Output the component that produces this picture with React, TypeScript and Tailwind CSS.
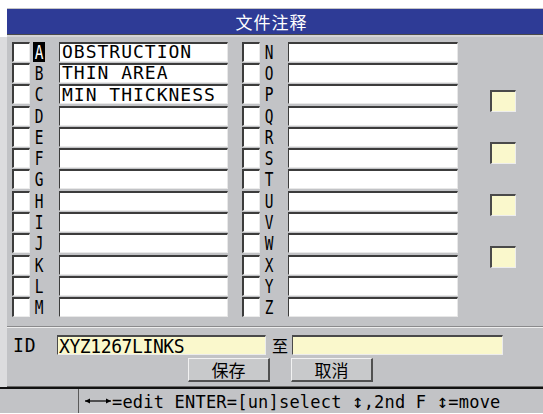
const LEFT = "ABCDEFGHIJKLM".split("");
const RIGHT = "NOPQRSTUVWXYZ".split("");
const NOTES = ["OBSTRUCTION", "THIN AREA", "MIN THICKNESS"];

function Check({ className = "" }: { className?: string }) {
  return (
    <div
      className={`h-[20px] w-[18px] shrink-0 border-t-2 border-l-2 border-b border-r border-t-[#3c3c3c] border-l-[#3c3c3c] border-b-[#ececec] border-r-[#ececec] bg-white ${className}`}
    />
  );
}

function Letter({ ch, active, className = "" }: { ch: string; active?: boolean; className?: string }) {
  return (
    <div
      className={`flex h-[20px] w-[12px] shrink-0 items-center justify-center ${
        active ? "bg-black text-white" : "text-black"
      } ${className}`}
    >
      <span className="inline-block scale-x-[0.85] scale-y-[1.12] text-[17px] leading-[16px]">{ch}</span>
    </div>
  );
}

function Field({ text, className = "" }: { text?: string; className?: string }) {
  return (
    <div
      className={`flex h-[20px] shrink-0 items-center overflow-hidden border-t-2 border-l border-b border-r border-t-[#3c3c3c] border-l-[#3c3c3c] border-b-[#e8e8e8] border-r-[#e8e8e8] bg-white pl-[2px] text-[18px] leading-none tracking-[1px] ${className}`}
    >
      {text}
    </div>
  );
}

function Row({ i }: { i: number }) {
  return (
    <div className="flex items-center">
      <Check className="ml-[5px]" />
      <Letter ch={LEFT[i]} active={i === 0} className="ml-[3px]" />
      <Field text={NOTES[i]} className="ml-[14px] w-[169px]" />
      <Check className="ml-[14px]" />
      <Letter ch={RIGHT[i]} className="ml-[3px]" />
      <Field className="ml-[13px] w-[170px]" />
    </div>
  );
}

function Swatch() {
  return (
    <div className="h-[22px] w-[26px] border-t-2 border-l-2 border-b border-r border-t-[#4a4a4a] border-l-[#4a4a4a] border-b-[#ededed] border-r-[#ededed] bg-[#faf8cc]" />
  );
}

function Btn({ label, className = "" }: { label: string; className?: string }) {
  return (
    <div
      className={`flex h-[24px] w-[82px] items-center justify-center border-t border-l border-b-2 border-r-2 border-t-[#f2f2f2] border-l-[#f2f2f2] border-b-[#505050] border-r-[#505050] bg-[#c8c9cb] font-['Noto_Sans_CJK_SC',sans-serif] text-[17px] leading-none ${className}`}
    >
      {label}
    </div>
  );
}

function LongArrow() {
  return (
    <svg width="28" height="10" viewBox="0 0 28 10" className="shrink-0">
      <path d="M1 5H27" stroke="#000" strokeWidth="1.2" />
      <path d="M1 5L6 2.5V7.5Z" fill="#000" />
      <path d="M27 5L22 2.5V7.5Z" fill="#000" />
    </svg>
  );
}

export default function App() {
  return (
    <div className="flex h-[414px] w-[543px] flex-col overflow-hidden bg-white font-['DejaVu_Sans_Mono',monospace] text-black">
      <div className="h-[8px] shrink-0 bg-white" />
      <div className="flex h-[29px] shrink-0">
        <div className="w-[7px] bg-white" />
        <div className="flex flex-1 flex-col">
          <div className="h-px bg-[#c4c4c6]" />
          <div className="flex h-[25px] items-center justify-center bg-[#2e3b96] pr-[7px]">
            <span className="font-['Noto_Sans_CJK_SC',sans-serif] text-[17px] leading-none tracking-[1px] text-white">
              文件注释
            </span>
          </div>
          <div className="h-px bg-[#4a4a4a]" />
          <div className="h-[2px] bg-[#d4d4d6]" />
        </div>
      </div>

      <div className="flex h-[350px] shrink-0">
        <div className="w-[7px] bg-[#dcdcde]" />
        <div className="flex flex-1 flex-col bg-[#c2c3c6]">
          <div className="flex h-[289px]">
            <div className="grid w-[451px] grid-rows-[repeat(13,1fr)] pt-[4px] pb-[8px]">
              {LEFT.map((_, i) => (
                <Row key={i} i={i} />
              ))}
            </div>
            <div className="flex flex-1 flex-col items-start gap-[30px] pl-[32px] pt-[53px]">
              <Swatch />
              <Swatch />
              <Swatch />
              <Swatch />
            </div>
          </div>
          <div className="h-px bg-[#8a8a8c]" />
          <div className="h-px bg-[#ededed]" />
          <div className="flex flex-1 flex-col pt-[7px]">
            <div className="flex h-[20px] items-center">
              <span className="ml-[6px] inline-block w-[30px] scale-y-[1.12] text-[18px] leading-[16px] tracking-[1px]">
                ID
              </span>
              <div className="ml-[14px] flex h-[20px] w-[209px] items-center border-t-2 border-l border-b border-r border-t-[#4a4a4a] border-l-[#4a4a4a] border-b-[#ececec] border-r-[#ececec] bg-[#faf8cc] pl-[1px]">
                <span className="inline-block scale-y-[1.12] whitespace-nowrap text-[18px] leading-[16px] tracking-[-0.4px]">
                  XYZ1267LINKS
                </span>
              </div>
              <span className="ml-[6px] font-['Noto_Sans_CJK_SC',sans-serif] text-[16px] leading-none">至</span>
              <div className="ml-[4px] h-[20px] w-[211px] border-t-2 border-l border-b border-r border-t-[#4a4a4a] border-l-[#4a4a4a] border-b-[#ececec] border-r-[#ececec] bg-[#faf8cc]" />
            </div>
            <div className="mt-[3px] flex">
              <Btn label="保存" className="ml-[181px]" />
              <Btn label="取消" className="ml-[21px]" />
            </div>
          </div>
          <div className="h-px bg-[#6a6a6a]" />
        </div>
      </div>

      <div className="h-[2px] shrink-0 bg-[#111111]" />
      <div className="flex h-[24px] shrink-0 items-center bg-[#c2c3c6]">
        <div className="h-full w-[79px] border-r border-r-[#5a5a5a]" />
        <div className="ml-[5px] flex items-center">
          <LongArrow />
          <span className="whitespace-nowrap text-[17px] leading-none tracking-[0.2px]">
            =edit ENTER=[un]select <span className="text-[19px]">↕</span>,2nd F <span className="text-[19px]">↕</span>=move
          </span>
        </div>
      </div>
    </div>
  );
}
